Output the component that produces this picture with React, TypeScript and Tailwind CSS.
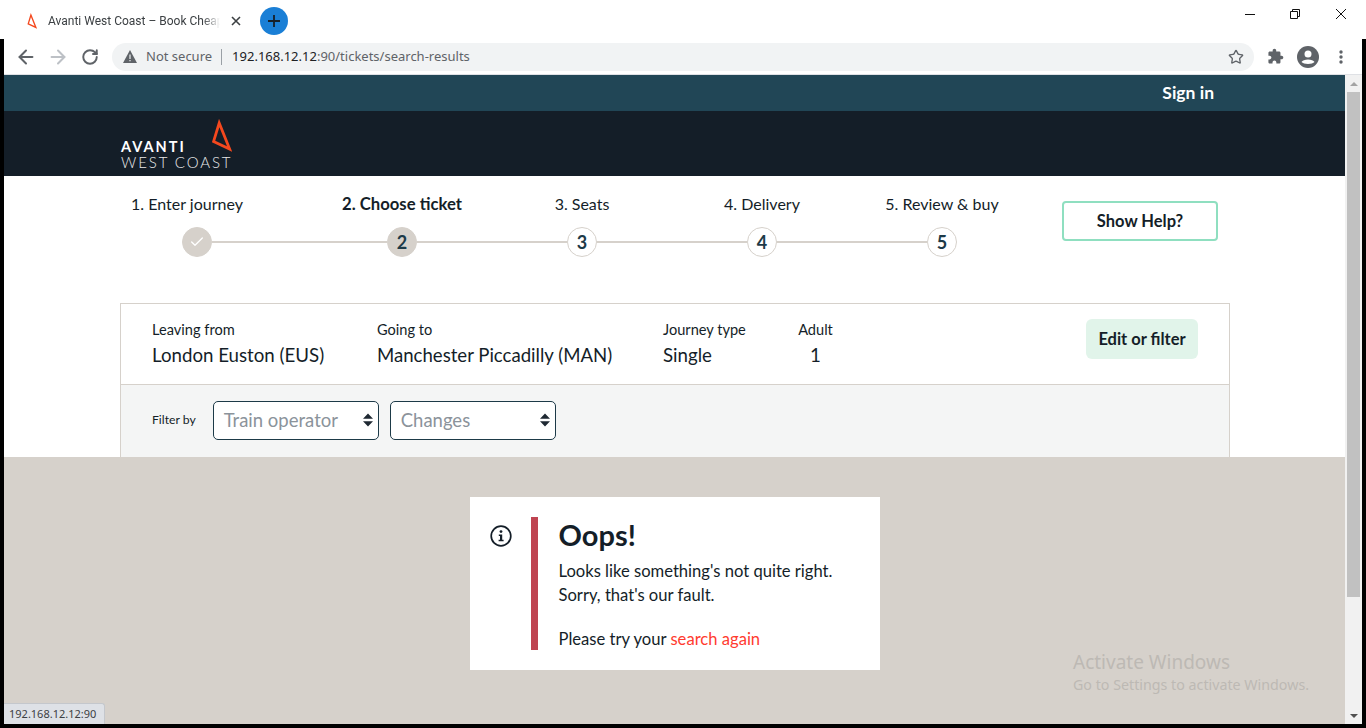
import React from "react";
import { ArrowLeft, ArrowRight, RotateCw, Star, Check } from "lucide-react";

const steps = [
  { label: "1. Enter journey", width: "w-[250px]" },
  { label: "2. Choose ticket", width: "w-[180px]", bold: true },
  { label: "3. Seats", width: "w-[180px]" },
  { label: "4. Delivery", width: "w-[180px]" },
  { label: "5. Review & buy", width: "w-[180px]" },
];

function Logo({ className }: { className: string }) {
  return (
    <svg viewBox="0 0 21 33" className={className} fill="none">
      <path d="M8.2 4 L18.6 30 L2.6 22.4 Z" stroke="#f4481e" strokeWidth="2.8" strokeLinejoin="miter" />
    </svg>
  );
}

function Circle({ children, done }: { children: React.ReactNode; done?: boolean }) {
  return (
    <div
      className={
        "flex h-[30px] w-[30px] shrink-0 items-center justify-center rounded-full border text-[18px] font-bold text-[#1d3a48] " +
        (done ? "border-[#d6d1cb] bg-[#d6d1cb]" : "border-[#d6d1cb] bg-white")
      }
    >
      {children}
    </div>
  );
}

function Select({ label }: { label: string }) {
  return (
    <div className="flex h-[39px] w-[166px] items-center justify-between rounded-[5px] border border-[#1d3a48] bg-white pl-[10px] pr-[5px]">
      <span className="pt-[2px] text-[18.5px] text-[#8b939b]">{label}</span>
      <svg width="10" height="14" viewBox="0 0 10 14" fill="#1f2933">
        <path d="M5 0.5 L10 5.8 H0 Z M5 13.5 L0 8.2 H10 Z" />
      </svg>
    </div>
  );
}

export default function App() {
  return (
    <div className="relative flex h-[728px] w-[1366px] flex-col overflow-hidden bg-white font-['Lato',sans-serif] text-[#141e28]">
      {/* browser title bar */}
      <div className="flex h-[39px] shrink-0 items-center pt-[2px] font-['Roboto',sans-serif]">
        <Logo className="ml-[27px] h-[16px] w-[10px]" />
        <div className="ml-[11px] w-[172px] whitespace-nowrap text-[12px] text-[#3c4043] [mask-image:linear-gradient(to_right,black_90%,transparent)]">
          Avanti West Coast – Book Cheap
        </div>
        <svg width="10" height="10" viewBox="0 0 10 10" stroke="#3c4043" strokeWidth="1.6" className="ml-[11px]">
          <path d="M1 1 L9 9 M9 1 L1 9" />
        </svg>
        <div className="ml-[19px] flex h-[28px] w-[28px] items-center justify-center rounded-full bg-[#1a7fd6]">
          <svg width="14" height="14" viewBox="0 0 14 14" stroke="#16202a" strokeWidth="1.8">
            <path d="M7 1 V13 M1 7 H13" />
          </svg>
        </div>
        <div className="mb-[14px] ml-auto flex items-center pr-[20px]">
          <svg width="10" height="10" viewBox="0 0 10 10" stroke="#111" className="mr-[35px]">
            <path d="M0 5.5 H10" />
          </svg>
          <svg width="10" height="10" viewBox="0 0 10 10" fill="none" stroke="#111" className="mr-[36px]">
            <path d="M0.5 2.5 H7.5 V9.5 H0.5 Z M2.5 2.5 V0.5 H9.5 V7.5 H7.5" />
          </svg>
          <svg width="10" height="10" viewBox="0 0 10 10" stroke="#111">
            <path d="M0 0 L10 10 M10 0 L0 10" />
          </svg>
        </div>
      </div>

      <div className="flex min-h-0 flex-1 border-x-4 border-b-4 border-black">
        <div className="flex min-w-0 flex-1 flex-col">
          {/* browser toolbar */}
          <div className="flex h-[36px] shrink-0 items-center border-b border-[#dfe1e5] bg-white font-['Noto_Sans',sans-serif]">
            <ArrowLeft size={22} strokeWidth={2.2} className="ml-[11px] text-[#5f6368]" />
            <ArrowRight size={22} strokeWidth={2.2} className="ml-[10px] text-[#bdc1c6]" />
            <RotateCw size={18} strokeWidth={2.6} className="ml-[12px] text-[#5f6368]" />
            <div className="ml-[13px] flex h-[28px] w-[1142px] items-center rounded-full bg-[#f1f3f4] pl-[11px] pr-[10px]">
              <svg width="14" height="13" viewBox="0 0 14 13" fill="#5f6368">
                <path d="M7 0 L14 13 H0 Z" />
                <path d="M6.4 4.5 H7.6 V9 H6.4 Z M6.4 10 H7.6 V11.2 H6.4 Z" fill="#f1f3f4" />
              </svg>
              <span className="ml-[9px] text-[13px] text-[#5f6368]">Not secure</span>
              <span className="ml-[9px] h-[16px] w-px bg-[#9aa0a6]" />
              <span className="ml-[10px] text-[13px] text-[#5f6368]">
                <span className="text-[#202124]">192.168.12.12</span>:90/tickets/search-results
              </span>
              <Star size={16} strokeWidth={2} className="ml-auto text-[#5f6368]" />
            </div>
            <svg width="17" height="17" viewBox="0 0 24 24" fill="#5f6368" className="ml-[13px]">
              <path d="M20.5 11H19V7c0-1.1-.9-2-2-2h-4V3.5C13 2.12 11.88 1 10.5 1S8 2.12 8 3.5V5H4c-1.1 0-1.99.9-1.99 2v3.8H3.5c1.49 0 2.7 1.21 2.7 2.7s-1.21 2.7-2.7 2.7H2V20c0 1.1.9 2 2 2h3.8v-1.5c0-1.49 1.21-2.7 2.7-2.7 1.49 0 2.7 1.21 2.7 2.7V22H17c1.1 0 2-.9 2-2v-4h1.5c1.38 0 2.5-1.12 2.5-2.5S21.88 11 20.5 11z" />
            </svg>
            <svg width="22" height="22" viewBox="0 0 22 22" className="ml-[13px]">
              <circle cx="11" cy="11" r="11" fill="#5f6368" />
              <circle cx="11" cy="8" r="3.5" fill="white" />
              <path d="M4.5 16 C6 12.5 16 12.5 17.5 16 C15.5 18.5 6.5 18.5 4.5 16 Z" fill="white" />
            </svg>
            <svg width="4" height="14" viewBox="0 0 4 14" fill="#5f6368" className="ml-[20px]">
              <circle cx="2" cy="2" r="1.7" />
              <circle cx="2" cy="7" r="1.7" />
              <circle cx="2" cy="12" r="1.7" />
            </svg>
          </div>

          <div className="flex min-h-0 flex-1">
            <div className="flex min-w-0 flex-1 flex-col">
              {/* site header */}
              <div className="flex h-[36px] shrink-0 items-center justify-end bg-[#214656] pr-[131px] pt-[1px] text-[17.5px] font-bold text-white">
                Sign in
              </div>
              <div className="flex h-[65px] shrink-0 items-end bg-[#141e28] pb-[6px] pl-[117px]">
                <div className="relative text-[#e8e8e8]">
                  <div className="text-[14.5px] font-bold leading-[16px] tracking-[2px] text-white">AVANTI</div>
                  <div className="text-[15px] font-light leading-[15px] tracking-[1.9px]">WEST COAST</div>
                  <Logo className="absolute right-0 top-[-20px] h-[33px] w-[21px]" />
                </div>
              </div>

              {/* stepper */}
              <div className="relative flex h-[127px] shrink-0 flex-col">
                <div className="flex pl-[58px] pt-[18px] text-[16px] leading-[20px]">
                  {steps.map((s) => (
                    <div key={s.label} className={s.width + " shrink-0 text-center " + (s.bold ? "text-[16.7px] font-bold" : "")}>
                      {s.label}
                    </div>
                  ))}
                </div>
                <div className="mt-[13px] flex items-center pl-[178px]">
                  <Circle done>
                    <Check size={16} strokeWidth={2} className="text-white" />
                  </Circle>
                  <div className="h-[2px] w-[175px] bg-[#d6d1cb]" />
                  <Circle done>2</Circle>
                  <div className="h-[2px] w-[150px] bg-[#d6d1cb]" />
                  <Circle>3</Circle>
                  <div className="h-[2px] w-[150px] bg-[#d6d1cb]" />
                  <Circle>4</Circle>
                  <div className="h-[2px] w-[150px] bg-[#d6d1cb]" />
                  <Circle>5</Circle>
                </div>
                <button className="absolute left-[1058px] top-[25px] flex h-[40px] w-[156px] items-center justify-center rounded-[4px] border-2 border-[#8fdfc0] bg-white text-[16.5px] font-bold">
                  Show Help?
                </button>
              </div>

              {/* journey summary */}
              <div className="ml-[116px] w-[1110px] shrink-0 border border-b-0 border-[#d6d1cb]">
                <div className="flex h-[81px] items-center border-b border-[#d6d1cb] pl-[31px] pr-[31px]">
                  <div className="w-[225px]">
                    <div className="text-[14.6px] leading-[20px]">Leaving from</div>
                    <div className="mt-[3px] text-[18.7px] leading-[25px]">London Euston (EUS)</div>
                  </div>
                  <div className="w-[286px]">
                    <div className="text-[14.6px] leading-[20px]">Going to</div>
                    <div className="mt-[3px] text-[18.6px] leading-[25px]">Manchester Piccadilly (MAN)</div>
                  </div>
                  <div className="w-[135px]">
                    <div className="text-[14.6px] leading-[20px]">Journey type</div>
                    <div className="mt-[3px] text-[18.7px] leading-[25px]">Single</div>
                  </div>
                  <div className="w-[35px] text-center">
                    <div className="text-[14.6px] leading-[20px]">Adult</div>
                    <div className="mt-[3px] text-[18.7px] leading-[25px]">1</div>
                  </div>
                  <button className="mb-[10px] ml-auto flex h-[40px] w-[112px] items-center justify-center rounded-[6px] bg-[#e1f4ea] text-[16.5px] font-bold">
                    Edit or filter
                  </button>
                </div>
                <div className="flex h-[72px] items-center gap-[11px] bg-[#f4f5f5] pb-[2px] pl-[31px]">
                  <span className="mr-[6px] text-[12.2px]">Filter by</span>
                  <Select label="Train operator" />
                  <Select label="Changes" />
                </div>
              </div>

              {/* error panel */}
              <div className="flex min-h-0 flex-1 justify-center bg-[#d6d1cb] pt-[40px]">
                <div className="flex h-[173px] w-[410px] bg-white pl-[20px] pt-[20px]">
                  <svg width="22" height="22" viewBox="0 0 22 22" fill="none" className="mt-[8px] shrink-0">
                    <circle cx="11" cy="11" r="9.8" stroke="#141e28" strokeWidth="1.7" />
                    <circle cx="11" cy="6.6" r="1.4" fill="#141e28" />
                    <path d="M8.8 9.4 H12.2 V14.8 H13.6 V16.3 H8.6 V14.8 H10 V10.9 H8.8 Z" fill="#141e28" />
                  </svg>
                  <div className="ml-[19px] flex h-[133px] border-l-[7px] border-[#bf4451] pl-[21px]">
                    <div>
                      <div className="text-[29px] font-bold leading-[36px]">Oops!</div>
                      <div className="mt-[6px] text-[16.6px] leading-[24px]">Looks like something's not quite right.</div>
                      <div className="text-[16.6px] leading-[24px]">Sorry, that's our fault.</div>
                      <div className="mt-[20px] text-[16.6px] leading-[24px]">
                        Please try your <span className="text-[#ff3b2f]">search again</span>
                      </div>
                    </div>
                  </div>
                </div>
              </div>
            </div>

            {/* page scrollbar */}
            <div className="flex w-[17px] shrink-0 flex-col items-center bg-[#f1f1f1]">
              <div className="flex h-[17px] items-center justify-center">
                <div className="h-0 w-0 border-x-[4px] border-b-[4px] border-x-transparent border-b-[#a3a3a3]" />
              </div>
              <div className="h-[505px] w-[13px] bg-[#c1c1c1]" />
              <div className="flex-1" />
              <div className="flex h-[17px] items-center justify-center">
                <div className="h-0 w-0 border-x-[4px] border-t-[4px] border-x-transparent border-t-[#505050]" />
              </div>
            </div>
          </div>
        </div>
      </div>

      {/* status bubble */}
      <div className="absolute bottom-[4px] left-[4px] flex h-[21px] w-[101px] items-center rounded-tr-[3px] border-r border-t border-[#c4c7cc] bg-[#dee1e6] pl-[5px] font-['Noto_Sans',sans-serif] text-[11px] text-[#3c4043]">
        192.168.12.12:90
      </div>

      {/* windows watermark */}
      <div className="absolute left-[1073px] top-[650px] font-['Noto_Sans',sans-serif] text-[#bdb9b4]">
        <div className="text-[19px] leading-[25px]">Activate Windows</div>
        <div className="text-[14.25px] leading-[20px]">Go to Settings to activate Windows.</div>
      </div>
    </div>
  );
}
